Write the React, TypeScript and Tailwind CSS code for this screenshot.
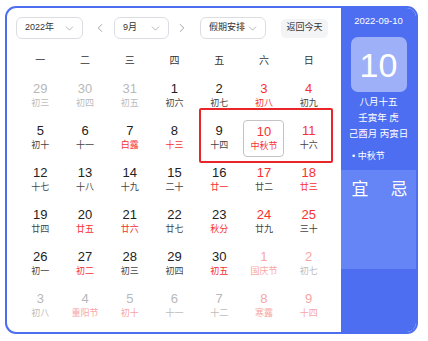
import { ChevronDown, ChevronLeft, ChevronRight } from "lucide-react";

type Tone = "n" | "r" | "g" | "p";

interface Day {
  d: number;
  l: string;
  dt: Tone; // colour of the date
  lt: Tone; // colour of the lunar text
}

const tone: Record<Tone, string> = {
  n: "text-[#222]",
  r: "text-[#f73131]",
  g: "text-[#b8b8b8]",
  p: "text-[#f7a5a5]",
};

const lunarTone: Record<Tone, string> = {
  n: "text-[#444]",
  r: "text-[#f73131]",
  g: "text-[#bcbcbc]",
  p: "text-[#f7a5a5]",
};

const day = (d: number, l: string, dt: Tone = "n", lt: Tone = "n"): Day => ({ d, l, dt, lt });

const weeks: Day[][] = [
  [day(29, "初三", "g", "g"), day(30, "初四", "g", "g"), day(31, "初五", "g", "g"), day(1, "初六"), day(2, "初七"), day(3, "初八", "r", "r"), day(4, "初九", "r")],
  [day(5, "初十"), day(6, "十一"), day(7, "白露", "n", "r"), day(8, "十三", "n", "r"), day(9, "十四"), day(10, "中秋节", "r", "r"), day(11, "十六", "r")],
  [day(12, "十七"), day(13, "十八"), day(14, "十九"), day(15, "二十"), day(16, "廿一", "n", "r"), day(17, "廿二", "r"), day(18, "廿三", "r", "r")],
  [day(19, "廿四"), day(20, "廿五", "n", "r"), day(21, "廿六", "n", "r"), day(22, "廿七"), day(23, "秋分", "n", "r"), day(24, "廿九", "r"), day(25, "三十", "r")],
  [day(26, "初一"), day(27, "初二", "n", "r"), day(28, "初三"), day(29, "初四"), day(30, "初五", "n", "r"), day(1, "国庆节", "p", "p"), day(2, "初七", "p", "g")],
  [day(3, "初八", "g", "g"), day(4, "重阳节", "g", "p"), day(5, "初十", "g", "p"), day(6, "十一", "g", "g"), day(7, "十二", "g", "g"), day(8, "寒露", "p", "p"), day(9, "十四", "p", "p")],
];

const weekdays = ["一", "二", "三", "四", "五", "六", "日"];

function Select({ label, width }: { label: string; width: string }) {
  return (
    <div
      className={`${width} h-[22px] flex items-center justify-between pl-[8px] pr-[6px] border border-[#dcdde2] rounded-[6px] bg-white text-[9px] text-[#333]`}
    >
      <span>{label}</span>
      <ChevronDown size={13} strokeWidth={1.3} className="text-[#9a9a9a]" />
    </div>
  );
}

export default function App() {
  return (
    <div className="pt-[6px] pl-[5px]" style={{ fontFamily: '"Liberation Sans", "Noto Sans CJK SC", sans-serif' }}>
      <div className="w-[413px] h-[328px] border-2 border-[#4e6ef2] rounded-[11px] overflow-hidden flex bg-white">
        {/* 左侧日历 */}
        <div className="w-[334px] relative">
          <div className="flex items-center pt-[9px] pl-[9px]">
            <Select label="2022年" width="w-[67px]" />
            <ChevronLeft size={14} strokeWidth={1.3} className="text-[#888] ml-[10px]" />
            <div className="ml-[7px]">
              <Select label="9月" width="w-[55px]" />
            </div>
            <ChevronRight size={14} strokeWidth={1.3} className="text-[#888] ml-[6px]" />
            <div className="ml-[11px]">
              <Select label="假期安排" width="w-[66px]" />
            </div>
            <div className="ml-[15px] w-[47px] h-[19px] flex items-center justify-center rounded-[5px] bg-[#f3f4f6] text-[9px] text-[#333]">
              返回今天
            </div>
          </div>

          <div className="ml-[11px] w-[313px] grid grid-cols-7 mt-[10px] h-[22px] items-center text-center text-[10px] text-[#333]">
            {weekdays.map((w) => (
              <span key={w}>{w}</span>
            ))}
          </div>

          <div className="ml-[11px] w-[313px] mt-[4px] grid grid-cols-7">
            {weeks.flat().map((c, i) => {
              const today = i === 12;
              return (
                <div key={i} className="h-[42px] flex items-center justify-center">
                  <div
                    className={`w-[41px] h-[37px] flex flex-col items-center pt-[3px] rounded-[4px] ${
                      today ? "border-[1.5px] border-[#c4c4c4]" : ""
                    }`}
                  >
                    <span className={`text-[13px] leading-[16px] ${tone[c.dt]}`}>{c.d}</span>
                    <span className={`text-[9px] leading-[12px] ${lunarTone[c.lt]}`}>{c.l}</span>
                  </div>
                </div>
              );
            })}
          </div>

          {/* 假期高亮框 */}
          <div className="absolute left-[192px] top-[100px] w-[134px] h-[55px] border-2 border-[#e8262a] rounded-[2px]" />
        </div>

        {/* 右侧详情 */}
        <div className="flex-1 bg-[#4e6ef2] text-white flex flex-col">
          <div className="pt-[7px] text-center text-[9.5px] leading-[12px]">2022-09-10</div>
          <div className="mt-[10px] mx-auto w-[56px] h-[55px] rounded-[7px] bg-[#9eb0f8] flex items-center justify-center text-[34px] leading-none">
            10
          </div>
          <div className="mt-[2px] text-center text-[9.5px] leading-[16px]">
            <div>八月十五</div>
            <div>壬寅年 虎</div>
            <div>己酉月 丙寅日</div>
          </div>
          <div className="mt-[7px] pl-[11px] text-[9px] leading-[14px]">• 中秋节</div>
          <div className="mt-[7px] h-[99px] bg-[#6584f5]">
            <div className="flex justify-center gap-[22px] pt-[9px] text-[17px] leading-[22px] pl-[2px]">
              <span>宜</span>
              <span>忌</span>
            </div>
          </div>
        </div>
      </div>
    </div>
  );
}
